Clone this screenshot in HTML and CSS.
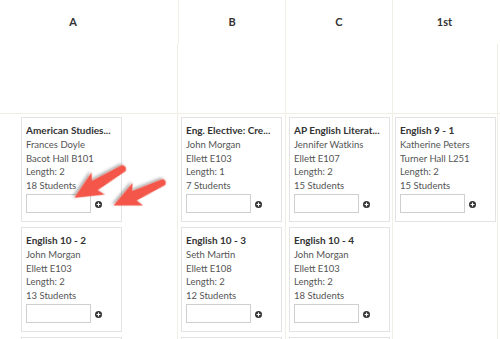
FILE: index.html
```html
<!DOCTYPE html>
<html>
<head>
<meta charset="utf-8">
<link rel="stylesheet" href="styles.css">
</head>
<body>
<div class="page">
  <div class="head">
    <div class="hcell hcell-a">A</div>
    <div class="hcell">B</div>
    <div class="hcell">C</div>
    <div class="hcell hcell-last">1st</div>
  </div>
  <div class="grid">
    <div class="spacer col-a"></div>
    <div class="spacer"></div>
    <div class="spacer"></div>
    <div class="spacer col-last"></div>
    <div class="spacer-end"></div>

    <div class="col col-a">
      <div class="card">
        <div class="title">American Studies...</div>
        <div class="info"><div>Frances Doyle</div><div>Bacot Hall B101</div><div>Length: 2</div><div>18 Students</div></div>
        <div class="add"><input class="field" type="text"><svg class="plus" viewBox="0 0 8 8"><circle cx="4" cy="4" r="4"/><path d="M4 1.8v4.4M1.8 4h4.4"/></svg></div>
      </div>
      <div class="card">
        <div class="title">English 10 - 2</div>
        <div class="info"><div>John Morgan</div><div>Ellett E103</div><div>Length: 2</div><div>13 Students</div></div>
        <div class="add"><input class="field" type="text"><svg class="plus" viewBox="0 0 8 8"><circle cx="4" cy="4" r="4"/><path d="M4 1.8v4.4M1.8 4h4.4"/></svg></div>
      </div>
      <div class="card card-peek"></div>
    </div>
    <div class="col">
      <div class="card">
        <div class="title">Eng. Elective: Cre...</div>
        <div class="info"><div>John Morgan</div><div>Ellett E103</div><div>Length: 1</div><div>7 Students</div></div>
        <div class="add"><input class="field" type="text"><svg class="plus" viewBox="0 0 8 8"><circle cx="4" cy="4" r="4"/><path d="M4 1.8v4.4M1.8 4h4.4"/></svg></div>
      </div>
      <div class="card">
        <div class="title">English 10 - 3</div>
        <div class="info"><div>Seth Martin</div><div>Ellett E108</div><div>Length: 2</div><div>12 Students</div></div>
        <div class="add"><input class="field" type="text"><svg class="plus" viewBox="0 0 8 8"><circle cx="4" cy="4" r="4"/><path d="M4 1.8v4.4M1.8 4h4.4"/></svg></div>
      </div>
      <div class="card card-peek"></div>
    </div>
    <div class="col">
      <div class="card">
        <div class="title">AP English Literat...</div>
        <div class="info"><div>Jennifer Watkins</div><div>Ellett E107</div><div>Length: 2</div><div>15 Students</div></div>
        <div class="add"><input class="field" type="text"><svg class="plus" viewBox="0 0 8 8"><circle cx="4" cy="4" r="4"/><path d="M4 1.8v4.4M1.8 4h4.4"/></svg></div>
      </div>
      <div class="card">
        <div class="title">English 10 - 4</div>
        <div class="info"><div>John Morgan</div><div>Ellett E103</div><div>Length: 2</div><div>18 Students</div></div>
        <div class="add"><input class="field" type="text"><svg class="plus" viewBox="0 0 8 8"><circle cx="4" cy="4" r="4"/><path d="M4 1.8v4.4M1.8 4h4.4"/></svg></div>
      </div>
      <div class="card card-peek"></div>
    </div>
    <div class="col col-last">
      <div class="card">
        <div class="title">English 9 - 1</div>
        <div class="info"><div>Katherine Peters</div><div>Turner Hall L251</div><div>Length: 2</div><div>15 Students</div></div>
        <div class="add"><input class="field" type="text"><svg class="plus" viewBox="0 0 8 8"><circle cx="4" cy="4" r="4"/><path d="M4 1.8v4.4M1.8 4h4.4"/></svg></div>
      </div>
    </div>
    <div class="col-end"></div>
  </div>

  <svg class="arrows" width="500" height="339" viewBox="0 0 500 339">
    <defs>
      <filter id="shadow" x="-30%" y="-30%" width="160%" height="160%">
        <feDropShadow dx="1" dy="2" stdDeviation="1.5" flood-color="#000" flood-opacity="0.35"/>
      </filter>
      <path id="arrow" d="M0 -3.4 Q-3.6 0 0 3.4 L34 5.4 L30 13 L58 0 L30 -13 L34 -5.4 Z"/>
    </defs>
    <use href="#arrow" class="arrow" transform="translate(124 168) rotate(149)"/>
    <use href="#arrow" class="arrow" transform="translate(164 182) rotate(155) scale(0.96)"/>
  </svg>
</div>
</body>
</html>
```

FILE: styles.css
```css
* { box-sizing: border-box; }
html, body {
  margin: 0;
  padding: 0;
  background: #fff;
  width: 500px;
  height: 339px;
  overflow: hidden;
}
body {
  font-family: Lato, "Open Sans", sans-serif;
  color: #555;
}
.page {
  position: relative;
  width: 500px;
  height: 339px;
  overflow: hidden;
}
.head {
  display: grid;
  grid-template-columns: 179px 107px 107px 1fr;
  height: 44px;
}
.hcell {
  display: flex;
  align-items: center;
  justify-content: center;
  font-weight: 700;
  font-size: 11px;
  color: #333;
  border-right: 1px solid #f1eee3;
  padding-bottom: 1px;
}
.hcell-a { padding-right: 32px; }
.hcell-last { border-right: none; padding-right: 4px; }

.grid {
  display: grid;
  grid-template-columns: 178px 108px 107px 105px 1fr;
  grid-template-rows: 70px auto;
}
.spacer {
  border-right: 1px solid #f1eee3;
  border-bottom: 1px solid #f1eee3;
}
.spacer-end { border-bottom: 1px solid #f1eee3; }
.col {
  border-right: 1px solid #f1eee3;
  padding: 3px 3px 0 3px;
  display: flex;
  flex-direction: column;
  gap: 5px;
  height: 230px;
}
.col-a { padding-left: 21px; }
.col-last { padding-left: 2px; }

.card {
  width: 101px;
  border: 1px solid #e3e3e3;
  background: #fff;
  padding: 5px 4px 8px 4px;
  flex: none;
}
.card-peek { height: 40px; }
.title {
  font-weight: 700;
  font-size: 10px;
  line-height: 14px;
  color: #333;
  white-space: nowrap;
  overflow: hidden;
}
.info {
  margin-top: 1px;
  font-size: 9.5px;
  line-height: 13.5px;
  color: #555;
  white-space: nowrap;
}
.add {
  margin-top: 2px;
  display: flex;
  align-items: center;
}
.field {
  width: 65px;
  height: 19px;
  margin: 0;
  padding: 0;
  border: 1px solid #cfcfcf;
  border-radius: 0;
  background: #fff;
  outline: none;
}
.plus {
  width: 7px;
  height: 7px;
  margin-left: 4px;
  margin-top: 1px;
}
.plus circle { fill: #333; }
.plus path { stroke: #fff; stroke-width: 1.3; fill: none; }

.arrows {
  position: absolute;
  left: 0;
  top: 0;
  pointer-events: none;
}
.arrow {
  fill: #f4574a;
  filter: url(#shadow);
}
```
